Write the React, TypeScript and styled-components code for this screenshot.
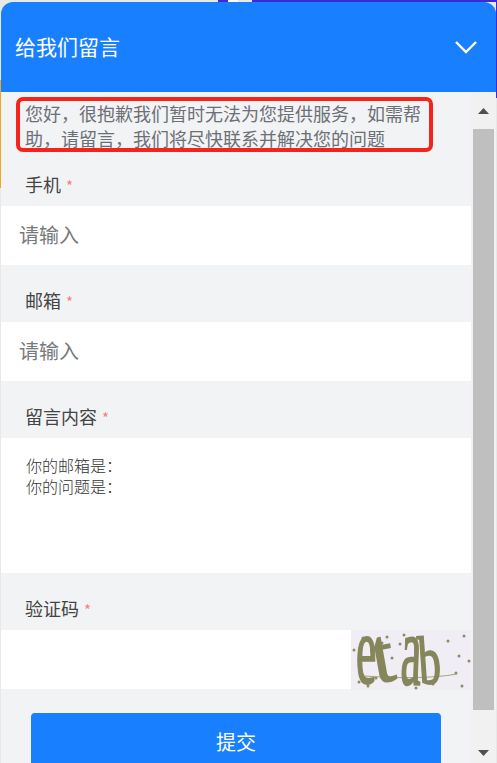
import React from "react";
import styled, { createGlobalStyle } from "styled-components";

const Global = createGlobalStyle`
  html, body { margin: 0; padding: 0; height: 100%; overflow: hidden; background: #e8e8e8; }
  * { box-sizing: border-box; }
  #root { height: 100%; }
`;

const FONT = `"Noto Sans CJK SC", "Liberation Sans", sans-serif`;

const Page = styled.div`
  width: 497px;
  height: 763px;
  padding: 2px 0 0 1px;
  overflow: hidden;
  font-family: ${FONT};
  background:
    linear-gradient(#f5a623, #f5a623) 0 80px / 1px 108px no-repeat,
    linear-gradient(#3b2bd6, #3b2bd6) 496px 0 / 1px 98px no-repeat,
    linear-gradient(#3b2bd6, #3b2bd6) 252px 0 / 245px 2px no-repeat,
    linear-gradient(#3b2bd6, #3b2bd6) 218px 0 / 10px 2px no-repeat,
    linear-gradient(#f8f8ff, #f8f8ff) 228px 0 / 10px 2px no-repeat,
    #e8e8e8;
`;

const Panel = styled.section`
  width: 495px;
  height: 761px;
  display: flex;
  flex-direction: column;
  overflow: hidden;
  border-radius: 12px 12px 0 0;
  background: #f2f3f5;
`;

const Header = styled.header`
  flex: none;
  height: 90px;
  padding: 0 18px 0 14px;
  display: flex;
  align-items: center;
  justify-content: space-between;
  background: #1880ff;
  color: #fff;
`;

const Title = styled.h1`
  margin: 0;
  font-size: 21px;
  line-height: 28px;
  font-weight: 400;
  transform: translateY(-1px);
`;

const Chevron = styled.svg`
  width: 24px;
  height: 14px;
  fill: none;
  stroke: #fff;
  stroke-width: 2.4;
`;

const Body = styled.div`
  flex: 1;
  min-height: 0;
  display: flex;
`;

const Form = styled.form`
  width: 470px;
  flex: none;
  overflow: hidden;
  padding-top: 5px;
`;

const Notice = styled.p`
  width: 417px;
  height: 55px;
  margin: 0 0 14px 15px;
  padding: 0 3px 0 5px;
  border: 4px solid #f5231c;
  border-radius: 7px;
  font-size: 18px;
  line-height: 24.5px;
  color: #6c7076;
`;

const Field = styled.div`
  & + & {
    margin-top: 17px;
  }
`;

const Label = styled.label`
  display: block;
  height: 40px;
  padding-left: 24px;
  font-size: 18px;
  line-height: 36px;
  color: #444;
`;

const Star = styled.span`
  margin-left: 5px;
  font-size: 15px;
  color: #f77f7f;
`;

const TextInput = styled.input`
  display: block;
  width: 100%;
  height: 59px;
  padding: 0 18px 3px;
  border: 0;
  outline: 0;
  background: #fff;
  font-family: ${FONT};
  font-size: 20px;
  &::placeholder {
    color: #77797c;
    opacity: 1;
  }
`;

const Message = styled.textarea`
  display: block;
  width: 100%;
  height: 135px;
  padding: 17px 25px;
  border: 0;
  outline: 0;
  resize: none;
  background: #fff;
  font-family: ${FONT};
  font-size: 16px;
  font-weight: 300;
  line-height: 21px;
  color: #333;
`;

const CaptchaRow = styled.div`
  display: flex;
  height: 60px;
`;

const CaptchaInput = styled(TextInput)`
  width: 350px;
  flex: none;
`;

const CaptchaImage = styled.svg`
  width: 120px;
  height: 60px;
  flex: none;
  overflow: visible;
  background: #f0edf5;
`;

const Submit = styled.button`
  display: block;
  width: 410px;
  height: 60px;
  margin: 23px 0 0 30px;
  padding: 0 0 3px;
  border: 0;
  border-radius: 4px;
  background: #1880ff;
  color: #fff;
  font-family: ${FONT};
  font-size: 20px;
`;

const Scrollbar = styled.div`
  flex: 1;
  display: flex;
  flex-direction: column;
  align-items: flex-start;
  padding-left: 2px;
  background: #f1f1f1;
`;

const ArrowBox = styled.div`
  width: 21px;
  height: 37px;
  flex: none;
  display: flex;
  align-items: center;
  justify-content: center;
`;

const ArrowDownBox = styled(ArrowBox)`
  height: 53px;
  padding-top: 33px;
`;

const Arrow = styled.svg`
  width: 11px;
  height: 6px;
  fill: #505050;
`;

const Thumb = styled.div`
  width: 21px;
  height: 581px;
  flex: none;
  background: #bfbfbf;
`;

const dots: [number, number][] = [
  [3, 20], [12, 8], [36, 7], [31, 13], [53, 5], [49, 14], [41, 28], [97, 11], [113, 6],
  [108, 26], [118, 31], [105, 43], [17, 56], [8, 52], [25, 48], [82, 54], [111, 56], [65, 58],
];

const letters: { c: string; x: number; y: number; r: number; sx: number; sy: number }[] = [
  { c: "e", x: 5, y: 53, r: 0, sx: 0.46, sy: 0.98 },
  { c: "t", x: 25, y: 53, r: -10, sx: 0.78, sy: 0.78 },
  { c: "a", x: 49, y: 54, r: 2, sx: 0.46, sy: 1.0 },
  { c: "b", x: 69, y: 54, r: -4, sx: 0.44, sy: 0.68 },
];

const NOTICE =
  "\u60a8\u597d\uff0c\u5f88\u62b1\u6b49\u6211\u4eec\u6682\u65f6\u65e0\u6cd5\u4e3a\u60a8\u63d0\u4f9b\u670d\u52a1\uff0c\u5982\u9700\u5e2e\u52a9\uff0c\u8bf7\u7559\u8a00\uff0c\u6211\u4eec\u5c06\u5c3d\u5feb\u8054\u7cfb\u5e76\u89e3\u51b3\u60a8\u7684\u95ee\u9898";
const TEMPLATE = "\u4f60\u7684\u90ae\u7bb1\u662f\uff1a\n\u4f60\u7684\u95ee\u9898\u662f\uff1a";

export default function App() {
  return (
    <Page>
      <Global />
      <Panel>
        <Header>
          <Title>给我们留言</Title>
          <Chevron viewBox="0 0 24 14">
            <polyline points="2,2 12,12 22,2" />
          </Chevron>
        </Header>
        <Body>
          <Form onSubmit={(e) => e.preventDefault()}>
            <Notice>{NOTICE}</Notice>
            <Field>
              <Label>手机<Star>*</Star></Label>
              <TextInput placeholder="请输入" />
            </Field>
            <Field>
              <Label>邮箱<Star>*</Star></Label>
              <TextInput placeholder="请输入" />
            </Field>
            <Field>
              <Label>留言内容<Star>*</Star></Label>
              <Message defaultValue={TEMPLATE} />
            </Field>
            <Field>
              <Label>验证码<Star>*</Star></Label>
              <CaptchaRow>
                <CaptchaInput />
                <CaptchaImage viewBox="0 0 120 60">
                  {dots.map(([x, y]) => (
                    <circle key={`${x}-${y}`} cx={x} cy={y} r="1.5" fill="#8b8c62" />
                  ))}
                  <path d="M14 46 C40 48 80 49 106 44" fill="none" stroke="#a3a47e" strokeWidth="1" />
                  {letters.map((l) => (
                    <text
                      key={l.c}
                      transform={`translate(${l.x} ${l.y}) rotate(${l.r}) scale(${l.sx} ${l.sy})`}
                      fontFamily='"Liberation Serif", serif'
                      fontSize={100}
                      fill="#85865a"
                      stroke="#85865a"
                      strokeWidth="1.6"
                      vectorEffect="non-scaling-stroke"
                    >
                      {l.c}
                    </text>
                  ))}
                </CaptchaImage>
              </CaptchaRow>
            </Field>
            <Submit type="submit">提交</Submit>
          </Form>
          <Scrollbar>
            <ArrowBox>
              <Arrow viewBox="0 0 11 6"><polygon points="5.5,0 11,6 0,6" /></Arrow>
            </ArrowBox>
            <Thumb />
            <ArrowDownBox>
              <Arrow viewBox="0 0 11 6"><polygon points="0,0 11,0 5.5,6" /></Arrow>
            </ArrowDownBox>
          </Scrollbar>
        </Body>
      </Panel>
    </Page>
  );
}
